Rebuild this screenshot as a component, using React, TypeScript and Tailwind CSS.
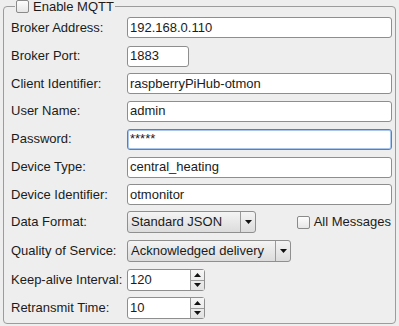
import React from "react";

const Entry = ({ value, width, focused }: { value: string; width: string; focused?: boolean }) => (
  <div
    className={`${width} h-[21px] bg-white rounded-[3px] flex items-center px-[2px] text-[13px] text-[#1b1b1b] ${
      focused
        ? "border border-[#5b7fae] shadow-[inset_0_0_0_1px_#a9c7ec]"
        : "border border-[#8e8e8e]"
    }`}
  >
    {value}
  </div>
);

const Arrow = ({ up }: { up?: boolean }) => (
  <svg width="7" height="4" viewBox="0 0 7 4">
    <polygon points={up ? "0,4 7,4 3.5,0" : "0,0 7,0 3.5,4"} fill="#111" />
  </svg>
);

const Combo = ({ value, width }: { value: string; width: string }) => (
  <div
    className={`${width} h-[22px] rounded-[3px] border border-[#8f8f8f] bg-gradient-to-b from-[#f4f4f4] to-[#dcdcdc] flex items-stretch text-[13px] text-[#1b1b1b]`}
  >
    <div className="flex-1 flex items-center pl-[3px]">{value}</div>
    <div className="w-[15px] border-l border-[#9a9a9a] flex items-center justify-center">
      <Arrow />
    </div>
  </div>
);

const Spin = ({ value }: { value: string }) => (
  <div className="w-[78px] h-[22px] rounded-[3px] border border-[#8e8e8e] bg-white flex items-stretch text-[13px] text-[#1b1b1b]">
    <div className="flex-1 flex items-center pl-[2px]">{value}</div>
    <div className="w-[14px] flex flex-col border-l border-[#9a9a9a] bg-gradient-to-b from-[#f6f6f6] to-[#e2e2e2]">
      <div className="flex-1 flex items-center justify-center border-b border-[#9a9a9a]">
        <Arrow up />
      </div>
      <div className="flex-1 flex items-center justify-center">
        <Arrow />
      </div>
    </div>
  </div>
);

const Check = () => (
  <div className="w-[13px] h-[13px] rounded-[2px] border border-[#8a8a8a] bg-gradient-to-b from-[#fdfdfd] to-[#e6e6e6]" />
);

const rows = [
  { label: "Broker Address:", h: "h-[29px]", el: <Entry value="192.168.0.110" width="w-[265px]" /> },
  { label: "Broker Port:", h: "h-[28px]", el: <Entry value="1883" width="w-[62px]" /> },
  { label: "Client Identifier:", h: "h-[27px]", el: <Entry value="raspberryPiHub-otmon" width="w-[265px]" /> },
  { label: "User Name:", h: "h-[28px]", el: <Entry value="admin" width="w-[265px]" /> },
  { label: "Password:", h: "h-[28px]", el: <Entry value="*****" width="w-[265px]" focused /> },
  { label: "Device Type:", h: "h-[28px]", el: <Entry value="central_heating" width="w-[265px]" /> },
  { label: "Device Identifier:", h: "h-[27px]", el: <Entry value="otmonitor" width="w-[265px]" /> },
  {
    label: "Data Format:",
    h: "h-[28px]",
    el: (
      <div className="flex items-center w-[264px]">
        <Combo value="Standard JSON" width="w-[129px]" />
        <div className="ml-auto flex items-center gap-[4px] text-[#1b1b1b]">
          <Check />
          <span>All Messages</span>
        </div>
      </div>
    ),
  },
  { label: "Quality of Service:", h: "h-[30px]", el: <Combo value="Acknowledged delivery" width="w-[164px]" /> },
  { label: "Keep-alive Interval:", h: "h-[28px]", el: <Spin value="120" /> },
  { label: "Retransmit Time:", h: "h-[28px]", el: <Spin value="10" /> },
];

export default function App() {
  return (
    <div className="w-[399px] h-[326px] bg-[#eeeeee] pt-[6px] px-[3px] pb-[2px] font-['Liberation_Sans',Arial,sans-serif] text-[13px] text-[#1b1b1b] overflow-hidden">
      <div className="relative h-full border border-[#9c9c9c] rounded-[4px] pt-[6px] pl-[7px]">
        {/* legend sits over the border */}
        <div className="absolute top-[-7px] left-[11px] bg-[#eeeeee] px-[1px] flex items-center gap-[4px] leading-none">
          <Check />
          <span>Enable MQTT</span>
        </div>
        <div className="flex flex-col">
          {rows.map((r) => (
            <div key={r.label} className={`${r.h} flex items-center`}>
              <span className="w-[116px] shrink-0">{r.label}</span>
              {r.el}
            </div>
          ))}
        </div>
      </div>
    </div>
  );
}
